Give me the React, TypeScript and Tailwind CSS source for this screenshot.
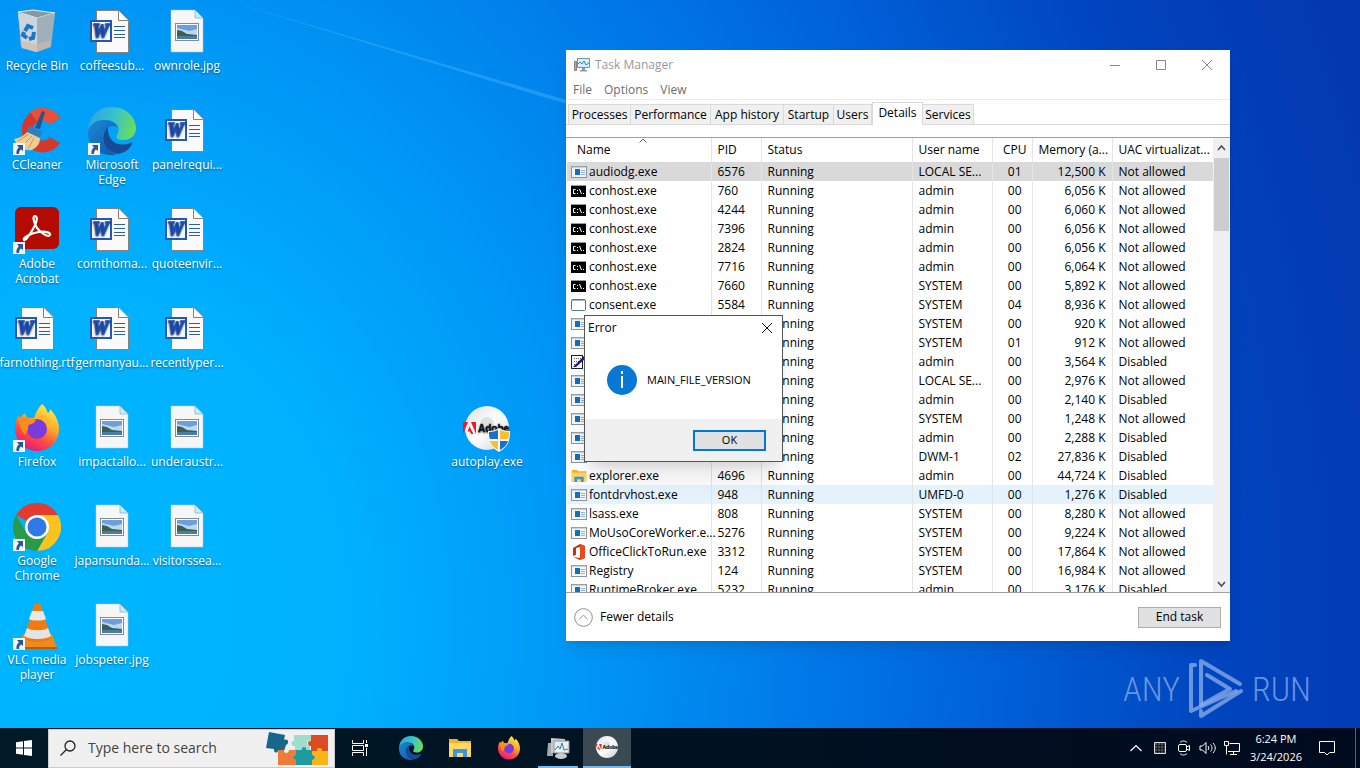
import type { ReactNode } from "react";

const WordDoc = () => (
  <svg viewBox="0 0 48 48" className="size-12">
    <path d="M8.500 2.500h22l10 10v32h-32z" fill="#fafafa" stroke="#8b7f78" />
    <path d="M30.500 2.500v10h10" fill="#fff" stroke="#8b7f78" />
    <path d="M26 18.500h11M26 22.500h11M26 26.500h11M26 29.500h11" stroke="#2b5fae" />
    <rect x="2" y="12" width="22" height="22" fill="#2458b8" />
    <rect x="4" y="14" width="18" height="18" fill="#f4f8ff" />
    <text x="12.500" y="29" textAnchor="middle" fontFamily="Liberation Serif, serif" fontSize="18" fontWeight="700" fontStyle="italic" fill="#1d4fb0" stroke="#1d4fb0" strokeWidth="1.600">
      W
    </text>
  </svg>
);

const Photo = () => (
  <svg viewBox="0 0 48 48" className="size-12">
    <path d="M8 2h24l8 8v34H8z" fill="#f6f6f6" stroke="#b9c4cc" strokeWidth=".5" />
    <path d="M32 2v8h8z" fill="#c9ecfa" stroke="#8fb6c8" strokeWidth=".8" />
    <rect x="12.500" y="15.500" width="23" height="17" fill="#fff" stroke="#7d8c99" />
    <path d="M14 17h20v14H14z" fill="#b9d8f1" />
    <path d="M14 17h20v4l-8 2-12-3z" fill="#6d9fdc" />
    <path d="M14 22l5 1 5 3 10 1v1H14z" fill="#3c5f4e" />
    <path d="M14 28h20v3H14z" fill="#4a7da6" />
  </svg>
);

const RecycleBin = () => (
  <svg viewBox="0 0 48 48" className="size-12">
    <path d="M5 5l17 3 20-4-5 35-15 5-14-5z" fill="#a9bcc9" />
    <path d="M5 4l15-2 22 3-18 5z" fill="#8498a5" stroke="#e4eef3" />
    <path d="M5 5l19 5v34l-15-4z" fill="#cbd5da" />
    <path d="M24 10l18-5-4 34-14 5z" fill="#9fb0bb" />
    <path d="M9 33l15 3 14-4-1 7-13 5-15-4z" fill="#d3b9a5" opacity=".6" />
    <g fill="none" stroke="#1976c9" strokeWidth="4">
      <path d="M12 23l3-5 5 2" />
      <path d="M21 24l-1 6-4 1" />
      <path d="M14 30l-4-3 1-3" />
    </g>
  </svg>
);

const CCleaner = () => (
  <svg viewBox="0 0 48 48" className="size-12">
    <path d="M47 11A21 22 0 1 0 47 36l-10-6a10 10 0 1 1 0-13z" fill="#d4382a" />
    <path d="M47 11A21 22 0 0 0 17 5l8 11a10 10 0 0 1 12 1z" fill="#e8503c" />
    <path d="M1 32c6-1 11-4 14-8l12 7c0 6-3 9-8 12-8 1-15-3-18-11z" fill="#efcd92" />
    <path d="M5 34l11-7M9 39l10-10M15 42l6-11" stroke="#c99c59" />
    <path d="M16 19l13 5-2 7-13-6z" fill="#2f7fc0" />
    <path d="M22 21l7-17 3 1-5 17z" fill="#23568c" />
  </svg>
);

const Edge = ({ className = "size-12" }: { className?: string }) => (
  <svg viewBox="0 0 48 48" className={className}>
    <defs>
      <linearGradient id="edge-top" x1="0" y1=".3" x2="1" y2=".5">
        <stop offset="0" stopColor="#2ea5e0" />
        <stop offset=".5" stopColor="#35c1cf" />
        <stop offset="1" stopColor="#6cdd58" />
      </linearGradient>
      <linearGradient id="edge-left" x1="0" y1="0" x2="1" y2="1">
        <stop offset="0" stopColor="#1a8ad8" />
        <stop offset="1" stopColor="#1155a8" />
      </linearGradient>
    </defs>
    <path d="M0 24C1 8 11 0 24 0c15 0 24 11 24 21 0 7-5 12-12 12-6 0-9-2-7-5 5-8-2-15-11-15C9 13 3 17 0 24z" fill="url(#edge-top)" />
    <path d="M0 24c2-7 8-11 16-11 7 0 12 3 14 8-4-4-15-2-15 9 0 8 5 15 13 17-1 1-3 1-5 1C10 48-1 38 0 24z" fill="url(#edge-left)" />
    <path d="M20 20c-7 5-8 24 10 27 6-1 11-4 14-10 1-1 0-2-2-1-12 5-23-2-22-16z" fill="#174b97" />
  </svg>
);

const Acrobat = () => (
  <svg viewBox="0 0 48 48" className="size-12">
    <rect x="2" y="1" width="44" height="42" rx="6" fill="#b30b00" />
    <path
      d="M24 22c-3-5-5-12-2-12s2 7-2 13c-4 7-8 12-9 11-2-2 7-7 15-8 8-1 12 1 11 3-2 3-10-3-13-7z"
      fill="none"
      stroke="#fff"
      strokeWidth="2.200"
    />
  </svg>
);

const Firefox = ({ className = "size-12" }: { className?: string }) => (
  <svg viewBox="0 0 48 48" className={className}>
    <defs>
      <linearGradient id="fox" x1=".8" y1="0" x2=".3" y2="1">
        <stop offset="0" stopColor="#fff34a" />
        <stop offset=".4" stopColor="#ffab2a" />
        <stop offset=".7" stopColor="#ff4a3e" />
        <stop offset="1" stopColor="#e3168a" />
      </linearGradient>
    </defs>
    <path d="M29 0c4 3 5 7 6 9 2-1 2-3 2-4 6 6 9 13 9 20 0 13-10 22-22 22S2 37 2 25C2 18 4 14 6 11c0 2 0 3 1 4 1-3 4-5 5-6 0 2 1 4 3 5h6c2-6 4-10 8-14z" fill="url(#fox)" />
    <circle cx="24" cy="25" r="10" fill="#7a3bdc" />
    <path d="M6 13c4 0 8 0 11 2l6 1c-1 4-7 4-8 6 1 5-2 5-3 9-5-5-7-12-6-18z" fill="#ff8a1f" />
    <path d="M22 15c7-1 13 3 13 10 3-5 1-12-5-14-3-1-6 1-8 4z" fill="#ffb52c" />
  </svg>
);

const Chrome = () => (
  <svg viewBox="0 0 48 48" className="size-12">
    <path d="M24 24L3.200 12A24 24 0 0 1 44.800 12z" fill="#e33b2e" />
    <path d="M24 12h20.800A24 24 0 0 1 24 48l10.400-18z" fill="#fcc31e" />
    <path d="M34.400 30L24 48A24 24 0 0 1 3.200 12l10.400 18z" fill="#2a9a48" />
    <circle cx="24" cy="24" r="12" fill="#fff" />
    <circle cx="24" cy="24" r="9.500" fill="#2f78e8" />
  </svg>
);

const Vlc = () => (
  <svg viewBox="0 0 48 48" className="size-12">
    <path d="M10 32h29l5 14H4z" fill="#f08a1a" />
    <path d="M4 45h40v2H4z" fill="#b85c0a" />
    <path d="M21 3c1-2 6-2 7 0l10 33c-3 5-24 5-27 0z" fill="#f17a10" />
    <path d="M19 9h11l3 8c-3 2-14 2-17 0z" fill="#e8e8e8" />
    <path d="M14 26c4 3 17 3 21 0l3 8c-5 4-22 4-27 0z" fill="#e4e4e4" />
  </svg>
);

const AdobeDisc = ({ className = "size-12" }: { className?: string }) => (
  <svg viewBox="0 0 48 48" className={className}>
    <defs>
      <linearGradient id="disc" x1="0" y1="0" x2="1" y2="1">
        <stop offset="0" stopColor="#d9dde0" />
        <stop offset=".5" stopColor="#ffffff" />
        <stop offset="1" stopColor="#c9ced2" />
      </linearGradient>
    </defs>
    <circle cx="24" cy="24" r="22" fill="url(#disc)" />
    <circle cx="24" cy="20" r="7" fill="#dfe2e4" />
    <path d="M0 18h5L0 30zM8 18h5v12zM6.500 22.500l4 7.500H8l-1-2.500H4.500z" fill="#ed1c24" />
    <text x="15" y="28" fontFamily="Liberation Sans, sans-serif" fontSize="10" fontWeight="700" fill="#111" stroke="#111" strokeWidth=".4">
      Adobe
    </text>
  </svg>
);

const Shield = () => (
  <svg viewBox="0 0 24 24" className="absolute right-0 bottom-0 size-6">
    <path d="M12 0c3 2 6 3 11 3 0 10-2 16-11 21C3 19 1 13 1 3c5 0 8-1 11-3z" fill="#f5f8fb" />
    <path d="M11 2v9H3c-1-2-1-4-1-7 4 0 6-1 9-2z" fill="#1f6fc9" />
    <path d="M13 2c3 1 5 2 9 2 0 3 0 5-1 7h-8z" fill="#fbbf2d" />
    <path d="M3 13h8v9c-4-2-7-5-8-9z" fill="#fbbf2d" />
    <path d="M13 13h8c-1 4-4 7-8 9z" fill="#1f6fc9" />
  </svg>
);

const ShortcutArrow = () => (
  <svg viewBox="0 0 12 12" className="absolute bottom-0 left-0 size-3">
    <path d="M0 0h12v12H0z" fill="#f4f6f8" />
    <path d="M4 2h6v6L8 6.500C6.500 7.500 6 9 6 11H3.500C3 8 4 6 5.800 4.200z" fill="#2b5797" />
  </svg>
);

const Puzzle = () => (
  <svg viewBox="0 0 62 36" className="h-9 w-[62px]">
    <path d="M3 2l16 3-1 5c4-2 6 3 2 5l-2 6-6-1c0 4-5 3-4-1L0 18z" fill="#15678c" />
    <path d="M28 5h17v6c-4-2-6 4-1 5v5H29v-5c-4 1-5-6-1-5z" fill="#9fdccb" />
    <path d="M45 5h17v17h-6c1-4-6-4-5 0h-6v-6c-4 0-4-6 0-5z" fill="#dd4b22" />
    <path d="M12 20h6c-1 4 5 4 5 0h7v5c-4 0-4 5 0 5v5H12z" fill="#ee7b36" />
    <path d="M30 20h6c-1-4 5-4 4 0h6v5c4-1 4 6 0 5v5H30v-5c-4 0-4-5 0-5z" fill="#1e9ba0" />
    <path d="M46 21h5c-1-4 6-4 5 0h6v14H46v-5c4 0 4-6 0-5z" fill="#fbb416" />
  </svg>
);

const Folder = ({ className }: { className: string }) => (
  <svg viewBox="0 0 24 20" className={className}>
    <path d="M1 1h8l2 2h12v16H1z" fill="#f0b429" />
    <path d="M1 5h22v14H1z" fill="#ffd766" />
    <path d="M5 19v-8h14v8h-4v-4H9v4z" fill="#3a96dd" />
  </svg>
);

const Monitors = ({ className }: { className: string }) => (
  <svg viewBox="0 0 24 24" className={className}>
    <path d="M2 7h5v13H1z" fill="#a5a9ad" />
    <path d="M5 2l14 1v13L5 17z" fill="#c4cacd" />
    <path d="M8 5h15v12H8z" fill="#e7edf0" stroke="#8e9599" />
    <path d="M9 14l3-4 2 3 2-6 2 7 4-1" fill="none" stroke="#2a7fae" />
    <ellipse cx="15" cy="20" rx="6" ry="3" fill="#c7ccd0" />
  </svg>
);

const SmallMonitor = () => (
  <svg viewBox="0 0 16 16" className="size-4">
    <path d="M.5 4.500h2v9h-2z" fill="#b9a9a4" stroke="#8c7f7c" />
    <path d="M3.500 1.500h12v9h-12z" fill="#d5f0fb" stroke="#7f8f98" />
    <path d="M4 7l2-2 2 2 2-3 2 4 3-2" fill="none" stroke="#2a90c4" />
    <path d="M8 11h3v2h2v1.500H6V13h2z" fill="#8f9ba2" />
  </svg>
);

type ProcessIcon = "app" | "console" | "window" | "pen" | "folder" | "office";

const ProcIcon = ({ kind }: { kind: ProcessIcon }) => {
  if (kind === "folder") return <Folder className="size-4 shrink-0" />;
  return (
    <svg viewBox="0 0 16 16" className="size-4 shrink-0">
      {kind === "app" && (
        <>
          <rect x=".5" y="2.500" width="15" height="11" fill="#f4f6f8" stroke="#8a949c" />
          <path d="M1 3h14" stroke="#a8b0b6" />
          <path d="M4 5h5v6H4z" fill="#0f6fc6" />
          <path d="M10 6.500h4M10 8.500h4M10 10.500h4" stroke="#8fb3d2" />
        </>
      )}
      {kind === "console" && (
        <>
          <rect y="3" width="15" height="11" fill="#000" />
          <path d="M0 2.500h15" stroke="#999" />
          <path d="M4.500 6.500h-2v4h2M6.500 7v1M6.500 10v1M8.500 6l2 5M12 10.500h1" fill="none" stroke="#fff" />
        </>
      )}
      {kind === "window" && (
        <>
          <rect x=".5" y="2.500" width="14" height="11" rx="1" fill="#fff" stroke="#4b78a8" />
          <path d="M1 3h13" stroke="#3b6ea5" />
        </>
      )}
      {kind === "pen" && (
        <>
          <rect x=".5" y="1.500" width="11" height="13" fill="#fff" stroke="#222" />
          <path d="M3 4.500h7M3 7.500h6M3 10.500h3" stroke="#555" strokeDasharray="1 1" />
          <path d="M2 13L13 2l3 1L5 13z" fill="#1a1a8c" />
        </>
      )}
      {kind === "office" && (
        <>
          <path d="M2 4l7-4 5 2v12l-5 2-7-3 7 1V3L5 4v7l-3 1z" fill="#c8330a" />
          <path d="M9 0l5 2v12l-5 2z" fill="#ea4b1c" />
        </>
      )}
    </svg>
  );
};

const desktopIcons: { label: string; icon: ReactNode; shortcut?: boolean }[] = [
  { label: "Recycle Bin", icon: <RecycleBin /> },
  { label: "CCleaner", icon: <CCleaner />, shortcut: true },
  { label: "Adobe Acrobat", icon: <Acrobat />, shortcut: true },
  { label: "farnothing.rtf", icon: <WordDoc /> },
  { label: "Firefox", icon: <Firefox />, shortcut: true },
  { label: "Google Chrome", icon: <Chrome />, shortcut: true },
  { label: "VLC media player", icon: <Vlc />, shortcut: true },
  { label: "coffeesub...", icon: <WordDoc /> },
  { label: "Microsoft Edge", icon: <Edge />, shortcut: true },
  { label: "comthoma...", icon: <WordDoc /> },
  { label: "germanyau...", icon: <WordDoc /> },
  { label: "impactallo...", icon: <Photo /> },
  { label: "japansunda...", icon: <Photo /> },
  { label: "jobspeter.jpg", icon: <Photo /> },
  { label: "ownrole.jpg", icon: <Photo /> },
  { label: "panelrequi...", icon: <WordDoc /> },
  { label: "quoteenvir...", icon: <WordDoc /> },
  { label: "recentlyper...", icon: <WordDoc /> },
  { label: "underaustr...", icon: <Photo /> },
  { label: "visitorssea...", icon: <Photo /> },
];

const DesktopIcon = ({ label, icon, children }: { label: string; icon: ReactNode; children?: ReactNode }) => (
  <button className="flex h-[99px] w-[74px] flex-col items-center gap-0.5 pt-2 text-xs leading-[15px] text-white [text-shadow:0_1px_2px_rgb(0_0_0/0.5)]">
    <span className="relative">
      {icon}
      {children}
    </span>
    <span>{label}</span>
  </button>
);

const tabs = [
  { name: "Processes", width: "w-[63px]" },
  { name: "Performance", width: "w-20" },
  { name: "App history", width: "w-[73px]" },
  { name: "Startup", width: "w-[50px]" },
  { name: "Users", width: "w-[38px]" },
  { name: "Details", width: "w-[51px]" },
  { name: "Services", width: "w-[51px]" },
];

type Process = [name: string, pid: string, user: string, cpu: string, memory: string, uac: string, icon: ProcessIcon];

const processes: Process[] = [
  ["audiodg.exe", "6576", "LOCAL SE...", "01", "12,500 K", "Not allowed", "app"],
  ["conhost.exe", "760", "admin", "00", "6,056 K", "Not allowed", "console"],
  ["conhost.exe", "4244", "admin", "00", "6,060 K", "Not allowed", "console"],
  ["conhost.exe", "7396", "admin", "00", "6,056 K", "Not allowed", "console"],
  ["conhost.exe", "2824", "admin", "00", "6,056 K", "Not allowed", "console"],
  ["conhost.exe", "7716", "admin", "00", "6,064 K", "Not allowed", "console"],
  ["conhost.exe", "7660", "SYSTEM", "00", "5,892 K", "Not allowed", "console"],
  ["consent.exe", "5584", "SYSTEM", "04", "8,936 K", "Not allowed", "window"],
  ["", "", "SYSTEM", "00", "920 K", "Not allowed", "app"],
  ["", "", "SYSTEM", "01", "912 K", "Not allowed", "app"],
  ["", "", "admin", "00", "3,564 K", "Disabled", "pen"],
  ["", "", "LOCAL SE...", "00", "2,976 K", "Not allowed", "app"],
  ["", "", "admin", "00", "2,140 K", "Disabled", "app"],
  ["", "", "SYSTEM", "00", "1,248 K", "Not allowed", "app"],
  ["", "", "admin", "00", "2,288 K", "Disabled", "app"],
  ["", "", "DWM-1", "02", "27,836 K", "Disabled", "app"],
  ["explorer.exe", "4696", "admin", "00", "44,724 K", "Disabled", "folder"],
  ["fontdrvhost.exe", "948", "UMFD-0", "00", "1,276 K", "Disabled", "app"],
  ["lsass.exe", "808", "SYSTEM", "00", "8,280 K", "Not allowed", "app"],
  ["MoUsoCoreWorker.e...", "5276", "SYSTEM", "00", "9,224 K", "Not allowed", "app"],
  ["OfficeClickToRun.exe", "3312", "SYSTEM", "00", "17,864 K", "Not allowed", "office"],
  ["Registry", "124", "SYSTEM", "00", "16,984 K", "Not allowed", "app"],
  ["RuntimeBroker.exe", "5232", "admin", "00", "3,176 K", "Disabled", "app"],
];

const rowColor = (name: string) => {
  if (name === "audiodg.exe") return "h-[19px] bg-[#d9d9d9]";
  if (name === "fontdrvhost.exe") return "h-[19px] bg-[#e5f3ff]";
  return "h-[19px]";
};

const cell = "border-l border-[#e5e5e5] p-0 pl-1.5 whitespace-nowrap";

const ProcessTable = () => (
  <div className="min-w-0 flex-1">
    <table className="w-full table-fixed border-collapse leading-[18px]">
      <colgroup>
        <col className="w-36" />
        <col className="w-[50px]" />
        <col />
        <col className="w-20" />
        <col className="w-10" />
        <col className="w-20" />
        <col className="w-[101px]" />
      </colgroup>
      <thead>
        <tr className="h-6 text-left [&>th]:font-normal">
          <th className="relative p-0 pl-2.5">
            Name
            <svg viewBox="0 0 8 5" className="absolute top-0 left-1/2 h-[5px] w-2">
              <path d="M.5 4.500L4 1l3.500 3.500" fill="none" stroke="#666" />
            </svg>
          </th>
          <th className={cell}>PID</th>
          <th className={cell}>Status</th>
          <th className={cell}>User name</th>
          <th className="border-l border-[#e5e5e5] p-0 pr-[5px] text-right">CPU</th>
          <th className={cell}>Memory (a...</th>
          <th className={cell}>UAC virtualizat...</th>
        </tr>
      </thead>
      <tbody>
        {processes.map(([name, pid, user, cpu, memory, uac, icon], i) => (
          <tr key={i} className={rowColor(name)}>
            <td className="p-0 pl-1 whitespace-nowrap">
              <span className="flex items-center gap-0.5">
                <ProcIcon kind={icon} />
                {name}
              </span>
            </td>
            <td className={cell}>{pid}</td>
            <td className={cell}>Running</td>
            <td className={cell}>{user}</td>
            <td className={`${cell} pr-2.5 text-right`}>{cpu}</td>
            <td className={`${cell} pr-1.5 text-right`}>{memory}</td>
            <td className={cell}>{uac}</td>
          </tr>
        ))}
      </tbody>
    </table>
  </div>
);

const TaskManager = () => (
  <section className="absolute top-[50px] left-[566px] flex w-[664px] flex-col bg-white text-xs text-black shadow-lg">
    <header className="flex h-[30px] items-center gap-1 pl-2 text-[#999]">
      <SmallMonitor />
      <h1 className="flex-1 pl-px">Task Manager</h1>
      <button aria-label="Minimize" className="flex w-[46px] justify-center">
        <svg viewBox="0 0 10 10" className="size-2.5"><path d="M0 5.500h10" stroke="#888" /></svg>
      </button>
      <button aria-label="Maximize" className="-mx-1 flex w-[46px] justify-center">
        <svg viewBox="0 0 10 10" className="size-2.5"><path d="M.5.5h9v9h-9z" fill="none" stroke="#888" /></svg>
      </button>
      <button aria-label="Close" className="flex w-[46px] justify-center">
        <svg viewBox="0 0 10 10" className="size-2.5"><path d="M0 0l10 10M10 0L0 10" stroke="#888" /></svg>
      </button>
    </header>
    <nav className="flex h-5 items-center gap-3 border-b border-[#ececec] pl-[7px] text-[#6d6d6d]">
      <button>File</button>
      <button>Options</button>
      <button>View</button>
    </nav>
    <div className="flex h-[25px] items-end border-b border-[#d9d9d9] pl-0.5">
      {tabs.map(({ name, width }) => (
        <button
          key={name}
          className={`${width} border border-b-0 border-[#d9d9d9] ${
            name === "Details" ? "-mb-px h-[23px] bg-white pb-0.5" : "h-5 border-l-0 bg-[#f0f0f0] first:border-l"
          }`}
        >
          {name}
        </button>
      ))}
    </div>
    <div className="mt-3 flex h-[456px] overflow-hidden border-y border-[#a0a0a0] pl-px">
      <ProcessTable />
      <div className="flex w-[17px] flex-col items-center bg-[#f0f0f0]">
        <svg viewBox="0 0 17 20" className="h-5 w-[17px]"><path d="M5 12l3.500-4 3.500 4" fill="none" stroke="#505050" strokeWidth="1.600" /></svg>
        <div className="h-[73px] w-[15px] bg-[#cdcdcd]" />
        <svg viewBox="0 0 17 17" className="mt-auto size-[17px]"><path d="M5 7l3.500 4L12 7" fill="none" stroke="#505050" strokeWidth="1.600" /></svg>
      </div>
    </div>
    <footer className="flex h-12 items-center justify-between px-2 pr-[9px]">
      <button className="flex items-center gap-[7px]">
        <svg viewBox="0 0 20 20" className="size-[19px]">
          <circle cx="10" cy="10" r="9.300" fill="none" stroke="#8a8a8a" />
          <path d="M5.500 12l4.500-4.500 4.500 4.500" fill="none" stroke="#8a8a8a" />
        </svg>
        Fewer details
      </button>
      <button className="h-[21px] w-[83px] border border-[#adadad] bg-[#e1e1e1] leading-[18px]">End task</button>
    </footer>
  </section>
);

const ErrorDialog = () => (
  <section role="dialog" aria-label="Error" className="absolute top-[315px] left-[584px] w-[199px] border border-[#555] bg-white text-black shadow-xl">
    <header className="flex h-6 items-center justify-between pr-2.5 pl-[3px] text-xs">
      Error
      <button aria-label="Close">
        <svg viewBox="0 0 10 10" className="size-2.5"><path d="M0 0l10 10M10 0L0 10" stroke="#111" /></svg>
      </button>
    </header>
    <div className="flex h-[79px] items-center gap-2.5 pl-[22px] text-[11px]">
      <svg viewBox="0 0 30 30" className="size-[30px]">
        <circle cx="15" cy="15" r="15" fill="#0878d4" />
        <path d="M15 11v12M15 6v3" stroke="#fff" strokeWidth="2" />
      </svg>
      <p className="pt-0.5">MAIN_FILE_VERSION</p>
    </div>
    <div className="flex h-[42px] items-center justify-end bg-[#f0f0f0] pr-4">
      <button className="h-[21px] w-[73px] border-2 border-[#0078d7] bg-[#e1e1e1] text-[11px] leading-4">OK</button>
    </div>
  </section>
);

const Watermark = () => (
  <div className="absolute right-[49px] bottom-2 flex items-center gap-2 font-['Roboto_Condensed','Open_Sans_Condensed',Roboto,sans-serif] text-[34px] leading-none font-light text-[#84a9e6]/80">
    ANY
    <svg viewBox="0 0 56 62" className="h-[62px] w-14">
      <g fill="none" stroke="currentColor" strokeWidth="4" strokeLinejoin="round" strokeLinecap="round">
        <path d="M7 7H3v46L48 33" />
        <path d="M13 46V3l39 23" />
        <path d="M13 53v5l40-25" />
        <path d="M19 17l23 14-29 16" />
      </g>
    </svg>
    RUN
  </div>
);

const TaskButton = ({ label, className = "", children }: { label: string; className?: string; children: ReactNode }) => (
  <button aria-label={label} className={`flex h-10 w-12 items-center justify-center ${className}`}>
    {children}
  </button>
);

const Tray = () => (
  <div className="ml-auto flex h-10 items-center">
    <div className="grid w-[120px] grid-cols-5 place-items-center">
      <button aria-label="Show hidden icons">
        <svg viewBox="0 0 14 14" className="size-3.5"><path d="M1.500 10L7 4.500l5.500 5.500" fill="none" stroke="#fff" strokeWidth="1.200" /></svg>
      </button>
      <svg viewBox="0 0 14 14" className="size-3.5">
        <path d="M1.500 1.500h11v11h-11z" fill="#4a4f55" stroke="#ddd" />
        <path d="M4.500 2v10M7.500 2v10M10.500 2v10M2 4.500h10M2 7.500h10M2 10.500h10" stroke="#1c2128" />
      </svg>
      <svg viewBox="0 0 14 16" className="h-4 w-3.5" fill="none" stroke="#fff">
        <rect x="1.500" y="4.500" width="8" height="7" rx="1.500" />
        <path d="M9.500 7l3-1.500v5l-3-1.500M3 2.500C5 .5 8 .5 10 2.500M3 13.500c2 2 5 2 7 0" />
      </svg>
      <svg viewBox="0 0 18 16" className="h-4 w-[18px]" fill="none" stroke="#fff">
        <path d="M1 6h2.500L7 2.500v11L3.500 10H1zM9 6c1 1.500 1 2.500 0 4M11.500 4.500c2 2.500 2 4.500 0 7M14 3c3 3.500 3 6.500 0 10" />
      </svg>
      <svg viewBox="0 0 16 16" className="size-4" fill="none" stroke="#fff">
        <path d="M5.500 3.500h10v8H4M.5 1.500h4v4h-4zM2.500 5.500v9M9.500 11.500v3M6 14.500h7" />
      </svg>
    </div>
    <time className="ml-1.5 text-center text-[11px] leading-[18px]">
      6:24 PM
      <br />
      3/24/2026
    </time>
    <button aria-label="Notifications" className="mr-[19px] ml-4">
      <svg viewBox="0 0 18 18" className="size-[18px]"><path d="M1.500 2.500h15v11h-5L9 16l-2.500-2.500h-5z" fill="none" stroke="#fff" /></svg>
    </button>
    <div className="h-10 w-[5px] border-l border-[#5a6270]" />
  </div>
);

const Taskbar = () => (
  <footer className="flex h-10 items-center gap-px bg-linear-to-r from-[#001a26] to-[#000a1e] text-white">
    <TaskButton label="Start">
      <svg viewBox="0 0 16 16" className="size-4">
        <path d="M0 2.200l7-1V7.500H0zM8 1l8-1v7.500H8zM0 8.500h7v6.300l-7-1zM8 8.500h8V16l-8-1z" fill="#fff" />
      </svg>
    </TaskButton>
    <label className="-ml-px flex h-[39px] w-[287px] items-center gap-3 border border-[#ccc] bg-[#f0f0f0] pr-1.5 pl-[11px] text-[#333]">
      <svg viewBox="0 0 16 16" className="size-4 shrink-0">
        <path d="M6.500 9.500L.5 15.500" stroke="#222" strokeWidth="1.300" />
        <circle cx="10" cy="6" r="5" fill="none" stroke="#222" strokeWidth="1.300" />
      </svg>
      <input aria-label="Search" placeholder="Type here to search" className="w-0 flex-1 text-sm outline-none placeholder:text-[#444]" />
      <Puzzle />
    </label>
    <TaskButton label="Task view">
      <svg viewBox="0 0 16 16" className="size-4">
        <path d="M.5 0v3.500h11V0M.5 16v-3.500h11V16M.5 5.500h11v5H.5zM14.500 0v3M14.500 8v8" fill="none" stroke="#fff" />
        <path d="M13 4h3v3h-3z" fill="#fff" />
      </svg>
    </TaskButton>
    <TaskButton label="Microsoft Edge" className="ml-0.5"><Edge className="size-6" /></TaskButton>
    <TaskButton label="File Explorer"><Folder className="h-5 w-6" /></TaskButton>
    <TaskButton label="Firefox"><Firefox className="size-6" /></TaskButton>
    <TaskButton label="Task Manager" className="bg-[linear-gradient(#76b9ed,#76b9ed)] bg-[length:40px_2px] bg-bottom bg-no-repeat">
      <Monitors className="size-6" />
    </TaskButton>
    <TaskButton label="autoplay.exe" className="border-b-2 border-[#76b9ed] bg-[#3b4952]"><AdobeDisc className="size-6" /></TaskButton>
    <Tray />
  </footer>
);

const App = () => (
  <div className="flex min-h-screen flex-col overflow-hidden font-['Open_Sans',sans-serif]">
    <main className="relative min-h-[728px] flex-1 bg-[radial-gradient(100%_220%_at_5%_85%,#00b6ff_0%,#00b2ff_20%,#0098f6_37%,#006ce2_62%,#0044be_85%,#0438b0_100%)]">
      <svg viewBox="0 0 345 105" className="absolute top-0 left-[225px] h-[105px] w-[345px]">
        <path d="M0 0l345 101v4z" fill="#5cc0ff" opacity=".35" />
      </svg>
      <div className="grid w-max grid-flow-col grid-rows-7 gap-x-px">
        {desktopIcons.map(({ label, icon, shortcut }) => (
          <DesktopIcon key={label} label={label} icon={icon}>
            {shortcut && <ShortcutArrow />}
          </DesktopIcon>
        ))}
      </div>
      <div className="absolute top-[396px] left-[450px]">
        <DesktopIcon label="autoplay.exe" icon={<AdobeDisc />}>
          <Shield />
        </DesktopIcon>
      </div>
      <Watermark />
      <TaskManager />
      <ErrorDialog />
    </main>
    <Taskbar />
  </div>
);

export default App;
